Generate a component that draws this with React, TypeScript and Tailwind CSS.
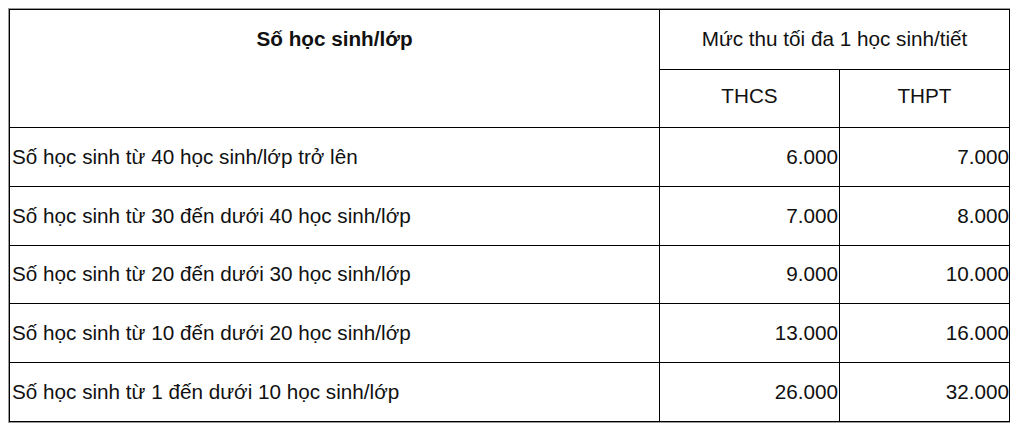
import React from "react";

const rows: [string, string, string][] = [
  ["Số học sinh từ 40 học sinh/lớp trở lên", "6.000", "7.000"],
  ["Số học sinh từ 30 đến dưới 40 học sinh/lớp", "7.000", "8.000"],
  ["Số học sinh từ 20 đến dưới 30 học sinh/lớp", "9.000", "10.000"],
  ["Số học sinh từ 10 đến dưới 20 học sinh/lớp", "13.000", "16.000"],
  ["Số học sinh từ 1 đến dưới 10 học sinh/lớp", "26.000", "32.000"],
];

const heights = ["h-[59px]", "h-[59px]", "h-[58px]", "h-[59px]", "h-[59px]"];

export default function App() {
  return (
    <div
      className="w-[1020px] h-[431px] bg-white pt-[8px] pl-[8px] text-[#111]"
      style={{ fontFamily: '"Liberation Sans", Arial, sans-serif' }}
    >
      <div className="w-[1002px] border border-[#9a9a9a]">
        <table className="table-fixed border-collapse w-[1000px] text-[20.7px] leading-none">
          <colgroup>
            <col className="w-[650px]" />
            <col className="w-[180px]" />
            <col className="w-[170px]" />
          </colgroup>
          <tbody>
            <tr className="h-[60px]">
              <td rowSpan={2} className="border border-black align-top p-0">
                <div className="h-[59px] flex items-center justify-center font-bold">
                  Số học sinh/lớp
                </div>
              </td>
              <td colSpan={2} className="border border-black text-center p-0">
                Mức thu tối đa 1 học sinh/tiết
              </td>
            </tr>
            <tr className="h-[58px]">
              <td className="border border-black text-center p-0 pb-[4px]">THCS</td>
              <td className="border border-black text-center p-0 pb-[4px]">THPT</td>
            </tr>
            {rows.map(([label, a, b], i) => (
              <tr key={i} className={heights[i]}>
                <td className="border border-black text-left pl-[2px] pr-0 py-0">{label}</td>
                <td className="border border-black text-right p-0 pr-[1px]">{a}</td>
                <td className="border border-black text-right p-0">{b}</td>
              </tr>
            ))}
          </tbody>
        </table>
      </div>
    </div>
  );
}
